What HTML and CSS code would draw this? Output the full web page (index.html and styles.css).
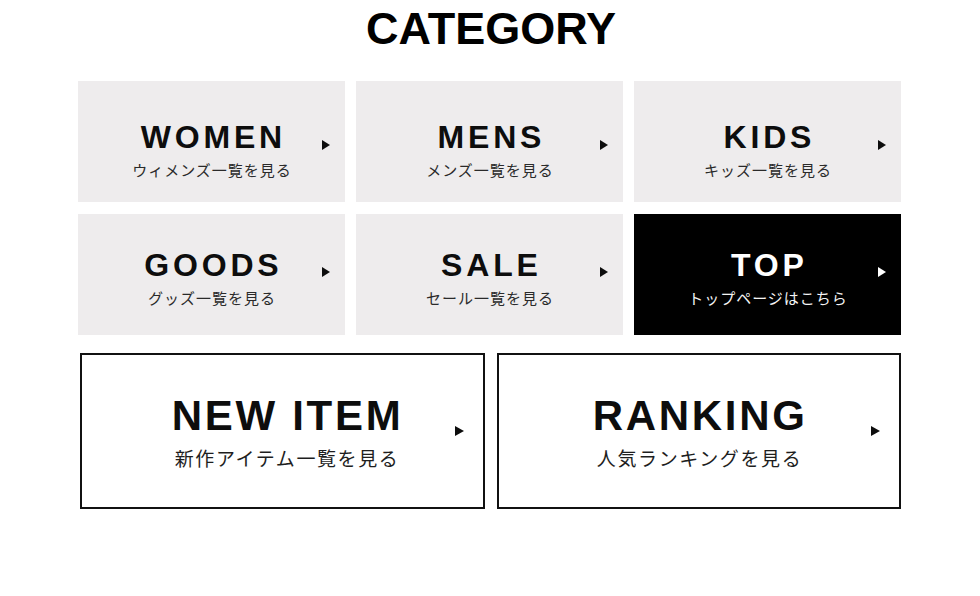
FILE: index.html
```html
<!DOCTYPE html>
<html lang="ja">
<head>
<meta charset="utf-8">
<title>CATEGORY</title>
<link rel="stylesheet" href="styles.css">
</head>
<body>
<main class="category">
  <h1 class="category-title">CATEGORY</h1>
  <div class="tile-grid">
    <a class="tile" href="#">
      <span class="tile-text">
        <span class="tile-name">WOMEN</span>
        <span class="tile-sub">ウィメンズ一覧を見る</span>
      </span>
      <svg class="arrow" viewBox="0 0 8 10" width="8" height="10"><polygon points="0,0 8,5 0,10"/></svg>
    </a>
    <a class="tile" href="#">
      <span class="tile-text">
        <span class="tile-name">MENS</span>
        <span class="tile-sub">メンズ一覧を見る</span>
      </span>
      <svg class="arrow" viewBox="0 0 8 10" width="8" height="10"><polygon points="0,0 8,5 0,10"/></svg>
    </a>
    <a class="tile" href="#">
      <span class="tile-text">
        <span class="tile-name">KIDS</span>
        <span class="tile-sub">キッズ一覧を見る</span>
      </span>
      <svg class="arrow" viewBox="0 0 8 10" width="8" height="10"><polygon points="0,0 8,5 0,10"/></svg>
    </a>
    <a class="tile tile--raised" href="#">
      <span class="tile-text">
        <span class="tile-name">GOODS</span>
        <span class="tile-sub">グッズ一覧を見る</span>
      </span>
      <svg class="arrow" viewBox="0 0 8 10" width="8" height="10"><polygon points="0,0 8,5 0,10"/></svg>
    </a>
    <a class="tile tile--raised" href="#">
      <span class="tile-text">
        <span class="tile-name">SALE</span>
        <span class="tile-sub">セール一覧を見る</span>
      </span>
      <svg class="arrow" viewBox="0 0 8 10" width="8" height="10"><polygon points="0,0 8,5 0,10"/></svg>
    </a>
    <a class="tile tile--raised tile--dark" href="#">
      <span class="tile-text">
        <span class="tile-name">TOP</span>
        <span class="tile-sub">トップページはこちら</span>
      </span>
      <svg class="arrow" viewBox="0 0 8 10" width="8" height="10"><polygon points="0,0 8,5 0,10"/></svg>
    </a>
  </div>
  <div class="box-grid">
    <a class="box box--shifted" href="#">
      <span class="box-text">
        <span class="box-name">NEW ITEM</span>
        <span class="box-sub">新作アイテム一覧を見る</span>
      </span>
      <svg class="arrow arrow--box" viewBox="0 0 9 10" width="9" height="10"><polygon points="0,0 9,5 0,10"/></svg>
    </a>
    <a class="box" href="#">
      <span class="box-text">
        <span class="box-name">RANKING</span>
        <span class="box-sub">人気ランキングを見る</span>
      </span>
      <svg class="arrow arrow--box" viewBox="0 0 9 10" width="9" height="10"><polygon points="0,0 9,5 0,10"/></svg>
    </a>
  </div>
</main>
</body>
</html>
```

FILE: styles.css
```css
* {
  box-sizing: border-box;
}

html, body {
  margin: 0;
  padding: 0;
  background: #ffffff;
}

body {
  font-family: "Liberation Sans", Arial, "Noto Sans CJK JP", sans-serif;
  color: #111;
}

a {
  text-decoration: none;
  color: inherit;
}

.category {
  width: 823px;
  margin-left: 78px;
}

.category-title {
  margin: 6px 0 0;
  font-size: 45px;
  line-height: 45px;
  font-weight: 700;
  text-align: center;
  color: #000;
  padding-left: 3px;
}

.tile-grid {
  margin-top: 30px;
  display: grid;
  grid-template-columns: repeat(3, 267px);
  grid-auto-rows: 121px;
  column-gap: 11px;
  row-gap: 12px;
}

.tile {
  display: grid;
  grid-template-columns: 1fr auto 1fr;
  align-items: start;
  background: #eeeced;
  padding-top: 40px;
  color: #0d0d0d;
}

.tile--raised {
  padding-top: 35px;
}

.tile--dark {
  background: #000;
  color: #fff;
}

.tile-text {
  grid-column: 2;
  display: flex;
  flex-direction: column;
  align-items: center;
}

.tile-name {
  font-size: 32px;
  line-height: 32px;
  font-weight: 700;
  letter-spacing: 3.8px;
  margin-right: -3.8px;
}

.tile-sub {
  margin-top: 9px;
  font-family: "Noto Sans CJK JP", sans-serif;
  font-size: 15px;
  line-height: 15px;
  letter-spacing: 1px;
  margin-right: -1px;
  color: #2a2a2a;
}

.tile--dark .tile-sub {
  color: #f4f4f4;
}

.arrow {
  grid-column: 3;
  justify-self: end;
  margin-top: 19px;
  margin-right: 15px;
  fill: currentColor;
}

.tile--raised .arrow {
  margin-top: 18px;
}

.box-grid {
  margin-top: 18px;
  margin-left: 2px;
  display: grid;
  grid-template-columns: 1fr 1fr;
  column-gap: 12px;
}

.box {
  display: grid;
  grid-template-columns: 1fr auto 1fr;
  align-items: start;
  height: 156px;
  border: 2px solid #111;
  padding-top: 40px;
  color: #0d0d0d;
}

.box--shifted {
  padding-left: 8px;
}

.box-text {
  grid-column: 2;
  display: flex;
  flex-direction: column;
  align-items: center;
}

.box-name {
  font-size: 42px;
  line-height: 42px;
  font-weight: 700;
  letter-spacing: 2.7px;
  margin-right: -2.7px;
}

.box-sub {
  margin-top: 11px;
  font-family: "Noto Sans CJK JP", sans-serif;
  font-size: 19px;
  line-height: 19px;
  letter-spacing: 1.6px;
  margin-right: -1.6px;
  color: #1e1e1e;
}

.arrow--box {
  margin-top: 31px;
  margin-right: 19px;
}
```
